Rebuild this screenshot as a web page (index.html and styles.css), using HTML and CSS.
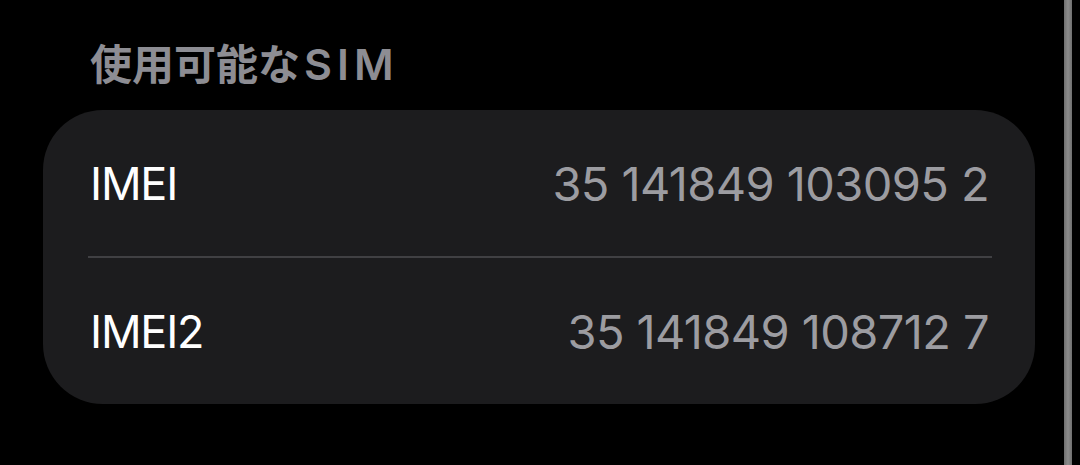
FILE: index.html
```html
<!DOCTYPE html>
<html lang="ja">
<head>
    <meta charset="UTF-8">
    <meta name="viewport" content="width=device-width, initial-scale=1.0">
    <title>使用可能なSIM</title>
    <link rel="stylesheet" href="styles.css">
</head>
<body>
    <div class="screen">
        <main class="content">
            <h2 class="section-title">使用可能な<span class="latin">SIM</span></h2>
            <div class="group">
                <div class="row">
                    <span class="label">IMEI</span>
                    <span class="value">35 141849 103095 2</span>
                </div>
                <div class="divider"></div>
                <div class="row">
                    <span class="label">IMEI2</span>
                    <span class="value">35 141849 108712 7</span>
                </div>
            </div>
        </main>
        <div class="scrollbar"></div>
    </div>
</body>
</html>
```

FILE: styles.css
```css
html, body {
    margin: 0;
    height: 100%;
    background-color: #000;
}

body {
    font-family: 'Inter', 'Noto Sans CJK JP', sans-serif;
    color: #fff;
}

.screen {
    display: flex;
    height: 100%;
}

.content {
    flex: 1;
    padding: 0 0 0 43px;
}

.section-title {
    margin: 0;
    padding: 37px 0 0 47px;
    height: 110px;
    box-sizing: border-box;
    font-size: 42px;
    font-weight: 600;
    line-height: 54px;
    color: #8d8d93;
}

.section-title .latin {
    margin-left: 4px;
    font-size: 43px;
    letter-spacing: 5px;
}

.group {
    width: 992px;
    background-color: #1c1c1e;
    border-radius: 60px;
    overflow: hidden;
}

.row {
    display: flex;
    justify-content: space-between;
    align-items: center;
    height: 146px;
    padding: 0 46px 0 47px;
}

.divider {
    height: 2px;
    margin: 0 43px 0 45px;
    background-color: #404043;
}

.label {
    font-size: 45px;
    font-weight: 400;
    letter-spacing: -1.2px;
}

.value {
    font-size: 47px;
    color: #9c9ca1;
    letter-spacing: -0.6px;
}

.scrollbar {
    width: 8px;
    margin-right: 8px;
    background: linear-gradient(90deg, #6f6f6f 0%, #8c8c8c 50%, #6f6f6f 100%);
}
```
